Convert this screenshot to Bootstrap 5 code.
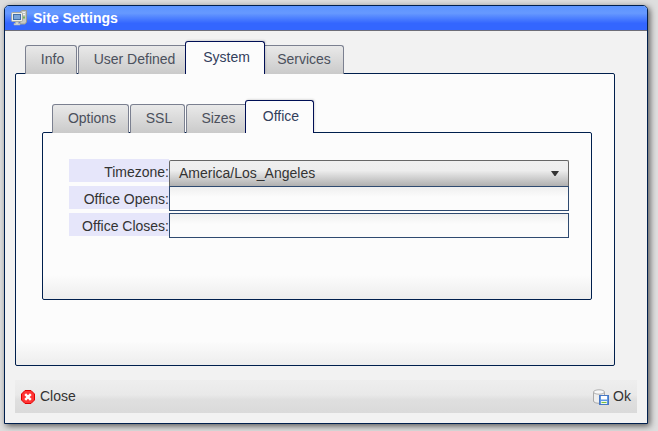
<!DOCTYPE html>
<html lang="en">
<head>
<meta charset="utf-8">
<title>Site Settings</title>
<link href="https://cdn.jsdelivr.net/npm/bootstrap@5.3.0/dist/css/bootstrap.min.css" rel="stylesheet">
<style>
body{background:#dedede;font:14px/16px "Liberation Sans",Arial,sans-serif;color:#333;height:431px;overflow:hidden;padding:5px 0 0 4px}
.dialog-box{width:644px;height:419px;border:1px solid #001f4d;border-radius:5px 5px 0 0;background:#f2f2f2;box-shadow:2px 2px 6px rgba(0,0,0,.6)}
.dialog-title{height:25px;border-bottom:1px solid #6e6e78;border-radius:4px 4px 0 0;background:linear-gradient(#5c94ff 0,#6699ff 30%,#3366ff 72%,#3366ff);color:#fff;font-weight:bold;padding-left:6px}
.dialog-title span{margin-left:6px}
.dialog-body{margin:10px 0 0 10px}
.tab-strip{position:relative;z-index:1;margin-bottom:-1px;padding-left:10px;height:33px;flex-wrap:nowrap}
.tab-strip .nav-link{height:29px;padding:5px 0 0 3px;border:1px solid #7b8090;border-bottom:0;border-radius:3px 3px 0 0;background:linear-gradient(#e9e9e9,#cacaca);color:#4b505c;text-align:center;margin-right:1px;line-height:16px;white-space:nowrap}
.tab-strip .nav-link.active{height:33px;padding-top:7px;background:#fcfcfc;border:1px solid #000f55;border-bottom:0;color:#33405c;margin:0;box-shadow:1px -1px 2px rgba(0,0,0,.12);clip-path:inset(-3px -3px 0 0)}
.tab-strip .before-active{border-right:0;border-top-right-radius:0;margin-right:0;padding-left:5px}
.tab-strip .after-active{border-left:0;border-top-left-radius:0;padding-left:0}
.pane{border:1px solid #001f4d;border-radius:2px;background:linear-gradient(#fcfcfc,#fcfcfc) top/100% calc(100% - 24px) no-repeat,linear-gradient(#fcfcfc,#ededed) bottom/100% 24px no-repeat}
.pane-outer{width:600px;height:293px;padding:26px 0 0 26px}
.pane-inner{width:550px;height:168px;padding:26px 0 0 26px}
.w52{width:52px}.w107{width:107px}.w80{width:80px}.w79{width:79px}.w77{width:77px}.w55{width:55px}.w59{width:59px}.w69{width:69px}
.field-label{width:100px;height:23px;background:#e6e6fa;text-align:right;line-height:27px}
.field-row{height:27px}
.field-box{width:400px;height:25px;border:1px solid #2f4a70;border-radius:0;padding:0 9px;background:linear-gradient(#efefef,#fcfcfc 10px);font-size:14px}
.picker{width:400px;height:27px;margin-top:1px;border:1px solid #666;border-bottom-color:#2f4a70;border-radius:2px 2px 0 0;background:linear-gradient(#efefef 0,#ededed 38%,#b0b0b0);padding:0 9px}
.picker span{padding-bottom:1px}
.button-bar{width:622px;height:33px;margin:14px 0 0 10px;padding:0 6px;background:linear-gradient(#eee,#e9e9e9 45%,#dfdfdf 60%,#dadada)}
.button-bar .btn{--bs-btn-color:#333;--bs-btn-padding-x:0;--bs-btn-padding-y:0;font-size:14px;line-height:16px;border:0}
.button-bar span{padding-bottom:2px}
.close-text{margin-left:1px}
svg{display:block;flex:none}
</style>
<script src="https://cdn.jsdelivr.net/npm/bootstrap@5.3.0/dist/js/bootstrap.bundle.min.js"></script>
</head>
<body>
<div class="dialog-box">
  <div class="dialog-title d-flex align-items-center">
    <svg width="16" height="16" viewBox="0 0 16 16"><path d="M9 2L11 .5h4.500v11.500L14 14H9z" fill="#c6c9c4" stroke="#979b95"/><path d="M11 2.500h3M11.500 4.500h2.500" stroke="#f2f2f2"/><path d="M13 6.500v2" stroke="#55b03a" stroke-width="1.500"/><rect x=".5" y="2.500" width="11" height="9" rx="1" fill="#eceeea" stroke="#a5a9a3"/><rect x="2.500" y="4.500" width="7" height="5" fill="#7ba5d8" stroke="#416fa8"/><path d="M4.500 12h3v1.500h1.500V15H3v-1.500h1.500z" fill="#d4d7d2" stroke="#b0b4ae" stroke-width=".6"/></svg>
    <span>Site Settings</span>
  </div>
  <div class="dialog-body">
    <div class="nav tab-strip align-items-end">
      <a class="nav-link w52">Info</a>
      <a class="nav-link w107 before-active">User Defined</a>
      <a class="nav-link active w80">System</a>
      <a class="nav-link w79 after-active">Services</a>
    </div>
    <div class="pane pane-outer">
      <div class="nav tab-strip align-items-end">
        <a class="nav-link w77">Options</a>
        <a class="nav-link w55">SSL</a>
        <a class="nav-link w59 before-active">Sizes</a>
        <a class="nav-link active w69">Office</a>
      </div>
      <div class="pane pane-inner">
        <div class="field-row d-flex"><div class="field-label">Timezone:</div>
          <div class="picker d-flex align-items-center justify-content-between"><span>America/Los_Angeles</span><svg width="8" height="5" viewBox="0 0 8 5"><path d="M0 0h8L4.500 5h-1z" fill="#333"/></svg></div></div>
        <div class="field-row d-flex"><label class="field-label" for="opens">Office Opens:</label><input id="opens" class="field-box"></div>
        <div class="field-row d-flex"><label class="field-label" for="closes">Office Closes:</label><input id="closes" class="field-box"></div>
      </div>
    </div>
  </div>
  <div class="button-bar d-flex align-items-center justify-content-between">
    <button class="btn d-flex align-items-center gap-1"><svg width="14" height="14" viewBox="0 0 14 14"><path d="M4 .5h6L13.500 4v6L10 13.500H4L.5 10V4z" fill="#f33" stroke="#e00000"/><path d="M4.200 4.200l5.600 5.600M9.800 4.200L4.200 9.800" stroke="#fff" stroke-width="2.400"/></svg><span class="close-text">Close</span></button>
    <button class="btn d-flex align-items-center gap-1"><svg width="16" height="16" viewBox="0 0 16 16"><path d="M.5 3v9c0 3 11 3 11 0V3" fill="#eee" stroke="#aaa"/><ellipse cx="6" cy="3" rx="5.500" ry="2.200" fill="#f8f8f8" stroke="#b0b0b0"/><rect x="6.500" y="6.500" width="9" height="9" fill="#5f98e4" stroke="#4878c4"/><rect x="8" y="7" width="6" height="3.500" fill="#fff"/><rect x="8" y="12" width="6" height="3" fill="#eef7e8"/><path d="M8.500 13.500h5" stroke="#75c044"/></svg><span>Ok</span></button>
  </div>
</div>
</body>
</html>
